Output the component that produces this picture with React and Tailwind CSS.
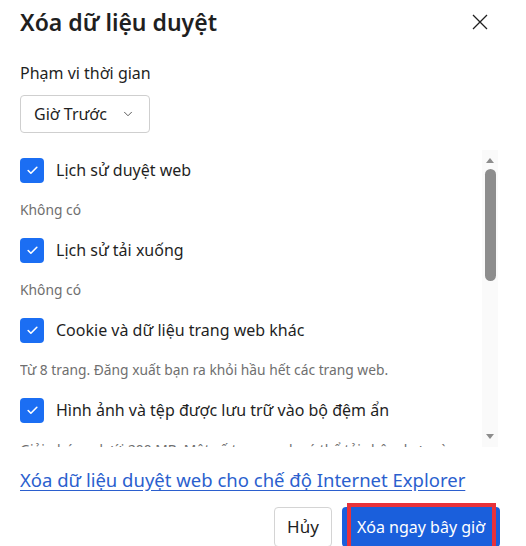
import { Check, ChevronDown } from "lucide-react";

const items = [
  { label: "Lịch sử duyệt web", note: "Không có" },
  { label: "Lịch sử tải xuống", note: "Không có" },
  { label: "Cookie và dữ liệu trang web khác", note: "Từ 8 trang. Đăng xuất bạn ra khỏi hầu hết các trang web." },
  {
    label: "Hình ảnh và tệp được lưu trữ vào bộ đệm ẩn",
    note: "Giải phóng dưới 200 MB. Một số trang web có thể tải chậm hơn vào",
  },
];

function CheckItem({ label, note }) {
  return (
    <div>
      <div className="flex h-[40px] items-center gap-[12px]">
        <span className="flex h-[25px] w-[24px] items-center justify-center rounded-[4px] bg-[#1b6ef3]">
          <Check size={13} strokeWidth={3} className="text-white" />
        </span>
        <span className="text-[16px] text-[#1f1f1f]">{label}</span>
      </div>
      <div className="flex h-[40px] items-center text-[13.8px] text-[#6f6f6f] whitespace-nowrap">{note}</div>
    </div>
  );
}

export default function App() {
  return (
    <div
      className="h-[546px] w-[526px] overflow-hidden bg-white"
      style={{ fontFamily: '"Noto Sans", "Open Sans", sans-serif' }}
    >
      <div className="flex h-[44px] items-center justify-between pl-[20px] pr-[38px]">
        <h1 className="text-[23px] font-semibold leading-none text-[#1f1f1f]">Xóa dữ liệu duyệt</h1>
        <svg width="16" height="16" viewBox="0 0 16 16" className="text-[#1f1f1f]">
          <path d="M1 1L15 15M15 1L1 15" stroke="currentColor" strokeWidth="1.3" fill="none" />
        </svg>
      </div>

      <div className="mt-[14px] flex h-[30px] items-center pl-[20px] text-[16px] text-[#1f1f1f]">
        Phạm vi thời gian
      </div>

      <div className="ml-[20px] mt-[7px] flex h-[38px] w-[130px] items-center justify-between rounded-[4px] border border-[#cfcfcf] pl-[13px] pr-[14px]">
        <span className="text-[16px] text-[#1f1f1f]">Giờ Trước</span>
        <ChevronDown size={14} strokeWidth={1.5} className="text-[#444]" />
      </div>

      <div className="mt-[17px] flex h-[297px] pl-[20px] pr-[28px]">
        <div className="flex-1 overflow-hidden pr-[12px]">
          {items.map((it) => (
            <CheckItem key={it.label} label={it.label} note={it.note} />
          ))}
        </div>
        <div className="flex w-[16px] flex-col items-center bg-[#fafafa] py-[8px]">
          <span className="h-0 w-0 border-x-[4px] border-b-[5px] border-x-transparent border-b-[#8d8d8d]" />
          <span className="mt-[6px] h-[112px] w-[11px] rounded-full bg-[#8d8d8d]" />
          <span className="flex-1" />
          <span className="h-0 w-0 border-x-[4px] border-t-[5px] border-x-transparent border-t-[#8d8d8d]" />
        </div>
      </div>

      <div className="mt-[18px] flex h-[30px] items-center pl-[20px]">
        <a href="#" className="text-[18.5px] text-[#2b5fce] underline underline-offset-[3px]">
          Xóa dữ liệu duyệt web cho chế độ Internet Explorer
        </a>
      </div>

      <div className="mt-[12px] flex justify-end gap-[10px] pr-[26px]">
        <button className="h-[40px] w-[58px] rounded-[4px] border border-[#d4d4d4] bg-white text-[17px] text-[#1f1f1f]">
          Hủy
        </button>
        <button className="relative h-[40px] w-[158px] rounded-[4px] bg-[#1a5fdc] text-[16px] text-white">
          Xóa ngay bây giờ
          <span className="pointer-events-none absolute left-[5px] right-[4px] top-[-4px] bottom-[-4px] border-[4px] border-[#e8323a]" />
        </button>
      </div>
    </div>
  );
}
